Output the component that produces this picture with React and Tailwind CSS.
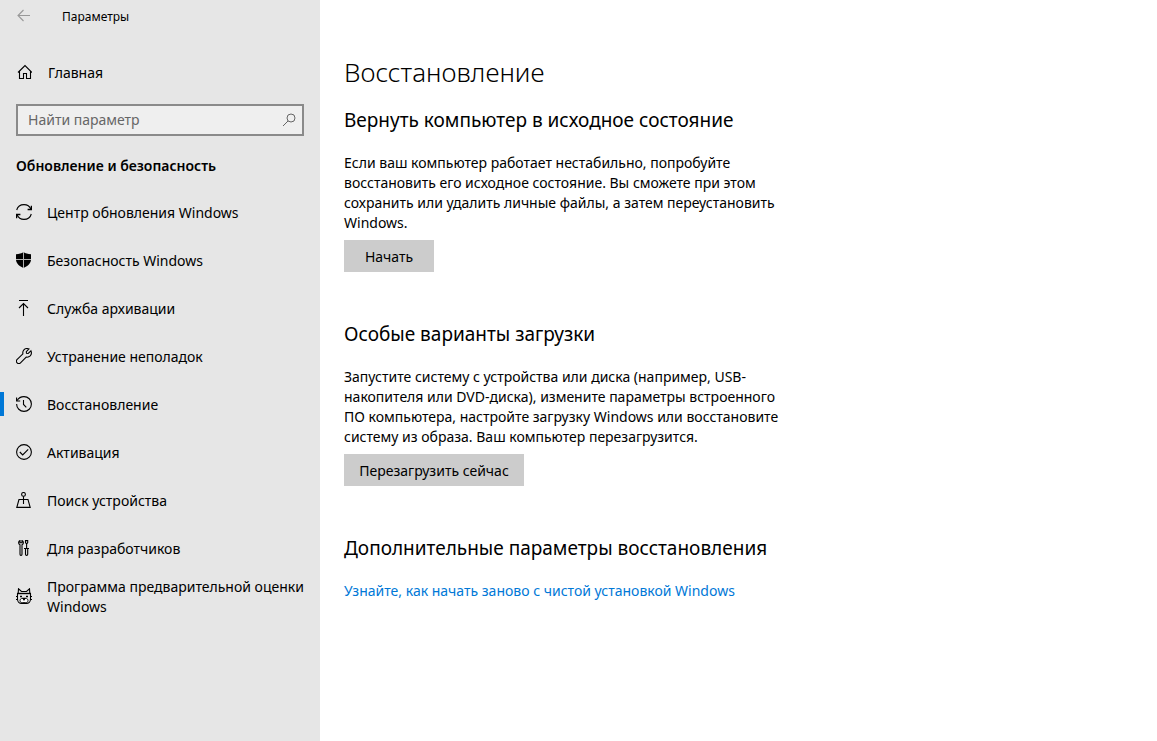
import { useState } from 'react';

const Icon = ({ children }) => (
  <svg
    viewBox="0 0 16 16"
    className="w-4 h-4 shrink-0"
    fill="none"
    stroke="currentColor"
    strokeWidth="1.1"
    aria-hidden="true"
  >
    {children}
  </svg>
);

const BackIcon = () => (
  <Icon>
    <path d="M14 7.5H2.5M7.5 2L2 7.5L7.5 13" />
  </Icon>
);

const HomeIcon = () => (
  <Icon>
    <path d="M2 8.5L9 1.5L16 8.5M3.5 7.5V14.5H7.5V9.5H10.5V14.5H14.5V7.5" />
  </Icon>
);

const SearchIcon = () => (
  <Icon>
    <circle cx="10" cy="6" r="4" strokeWidth="1" />
    <path d="M7 9L2 14" strokeWidth="1" />
  </Icon>
);

const UpdateIcon = () => (
  <Icon>
    <path d="M0.7 6C1.6 2.8 4.6 0.6 8 0.6C11.2 0.6 13.8 2.4 15 5.2M15.3 10C14.4 13.2 11.4 15.4 8 15.4C4.8 15.4 2.2 13.6 1 10.8" />
    <path d="M15.4 1.8V5.5H11.6M0.6 14.2V10.5H4.4" strokeWidth="1.3" />
  </Icon>
);

const ShieldIcon = () => (
  <Icon>
    <path
      d="M7.5 0C5.8 1.3 3 2.2 0 2.2V7.5C0 11.5 3.8 14.4 7.5 16C11.2 14.4 15 11.5 15 7.5V2.2C12 2.2 9.2 1.3 7.5 0Z"
      fill="currentColor"
      stroke="none"
    />
    <path d="M7.5 0V16M0 7.5H15" stroke="#b0b0b0" strokeWidth="1" />
  </Icon>
);

const BackupIcon = () => (
  <Icon>
    <path d="M3 0.5H12M7.5 16V3.5M3 8L7.5 3.5L12 8" />
  </Icon>
);

const WrenchIcon = () => (
  <Icon>
    <path d="M14.9 2.8L12.2 5.5L10.5 5.2L10.3 3.7L13 1C11.2 0.2 9 0.6 7.7 2.1C6.8 3.2 6.6 4.5 6.9 5.8L1.2 11.4C0.2 12.4 0.2 13.9 1.1 14.8C2.1 15.8 3.6 15.7 4.5 14.8L10.2 9.1C11.6 9.4 13.1 9 14.2 7.9C15.5 6.5 15.7 4.5 14.9 2.8Z" />
  </Icon>
);

const HistoryIcon = () => (
  <Icon>
    <path d="M1.1 4.6C2.4 2.2 5 0.6 8 0.6C12.1 0.6 15.4 3.9 15.4 8C15.4 12.1 12.1 15.4 8 15.4C3.9 15.4 0.6 12.1 0.6 8" />
    <path d="M0.6 1.5V5H4.2M7.5 4V8.5L10.3 11.3" />
  </Icon>
);

const CheckIcon = () => (
  <Icon>
    <circle cx="8" cy="8" r="7.4" />
    <path d="M3.8 8L6.7 10.9L12.2 5.4" />
  </Icon>
);

const FindDeviceIcon = () => (
  <Icon>
    <circle cx="7.5" cy="2.4" r="1.9" />
    <path d="M7.5 4.3V12M3 7.5L0.8 15.4H14.2L12 7.5Z" />
  </Icon>
);

const ToolsIcon = () => (
  <Icon>
    <path d="M4 0.6C3 1 2.6 1.8 2.6 2.7C2.6 3.6 3 4.2 4 4.8V14.2C4 15.7 6 15.7 6 14.2V4.8C7 4.2 7.4 3.6 7.4 2.7C7.4 1.8 7 1 6 0.6V2.8H4Z" />
    <path d="M9.5 0.6H11.7V2.5L10.6 4L9.5 2.5ZM10.6 4V8.5M8 8.5H13M9.5 8.5V14.3C9.5 15.7 11.7 15.7 11.7 14.3V8.5" />
  </Icon>
);

const InsiderIcon = () => (
  <Icon>
    <path d="M2.2 5.5L2.5 0.8L5.5 3.5H10.5L13.5 0.8L13.8 5.5" />
    <path d="M1 5.5H15" strokeWidth="1.4" />
    <path d="M1.5 5.5V11C1.5 13.8 3.5 15.4 5.5 15.4H10.5C12.5 15.4 14.5 13.8 14.5 11V5.5M0 8.5H2M14 8.5H16M0 11.5H2M14 11.5H16" />
    <path d="M4 8.5H6M10 8.5H12" strokeWidth="1.6" />
    <path
      d="M8 11C6.5 10 4 10.4 4 12.3C4 14 5.2 14.6 6.3 14.6H9.7C10.8 14.6 12 14 12 12.3C12 10.4 9.5 10 8 11Z"
      fill="#ffffff"
      strokeWidth="0.9"
    />
    <path d="M7 10.3H9L8 12Z" fill="currentColor" />
  </Icon>
);

const navItems = [
  { label: 'Центр обновления Windows', icon: UpdateIcon },
  { label: 'Безопасность Windows', icon: ShieldIcon },
  { label: 'Служба архивации', icon: BackupIcon },
  { label: 'Устранение неполадок', icon: WrenchIcon },
  { label: 'Восстановление', icon: HistoryIcon },
  { label: 'Активация', icon: CheckIcon },
  { label: 'Поиск устройства', icon: FindDeviceIcon },
  { label: 'Для разработчиков', icon: ToolsIcon },
  { label: 'Программа предварительной оценки Windows', icon: InsiderIcon },
];

const Section = ({ title, children }) => (
  <section className="mb-12">
    <h2 className="text-[19px] leading-7 mb-[19px]">{title}</h2>
    {children}
  </section>
);

const ActionButton = ({ className, children }) => (
  <button type="button" className={`mt-[7px] h-8 pt-0.5 bg-[#cccccc] hover:bg-[#bbbbbb] ${className}`}>
    {children}
  </button>
);

const App = () => {
  const [active, setActive] = useState('Восстановление');
  const [query, setQuery] = useState('');

  return (
    <div className="flex min-h-screen bg-white text-black text-sm leading-5 font-['Noto_Sans',sans-serif]">
      <aside className="w-80 shrink-0 bg-[#e6e6e6]">
        <header className="flex items-center h-8 pl-4">
          <button type="button" aria-label="Назад" className="text-[#999999]">
            <BackIcon />
          </button>
          <span className="ml-[30px] pt-0.5 text-xs">Параметры</span>
        </header>

        <a href="#home" className="flex items-center gap-4 h-12 mt-4 px-4">
          <HomeIcon />
          <span className="pt-0.5">Главная</span>
        </a>

        <label className="flex items-center h-8 mt-2 mx-4 pl-[10px] pr-[5px] border-2 border-[#8a8a8a] bg-[#efefef]">
          <input
            type="text"
            aria-label="Найти параметр"
            placeholder="Найти параметр"
            value={query}
            onChange={(e) => setQuery(e.target.value)}
            className="flex-1 min-w-0 bg-transparent outline-none placeholder:text-[#666666]"
          />
          <span className="text-[#666666]">
            <SearchIcon />
          </span>
        </label>

        <h2 className="mt-5 mb-3 px-4 font-semibold">Обновление и безопасность</h2>

        <nav>
          {navItems.map((item) => (
            <a
              key={item.label}
              href="#settings"
              onClick={() => setActive(item.label)}
              className="flex items-center h-12"
            >
              <span className={`w-1 h-6 mr-3 shrink-0 ${active === item.label ? 'bg-[#0078d7]' : ''}`} />
              <item.icon />
              <span className="ml-[15px] pt-0.5">{item.label}</span>
            </a>
          ))}
        </nav>
      </aside>

      <main className="flex-1 min-w-0 pl-6 pr-6 pt-[54px]">
        <h1 className="text-[26px] leading-9 font-light mb-4">Восстановление</h1>

        <Section title="Вернуть компьютер в исходное состояние">
          <p className="max-w-[448px]">
            Если ваш компьютер работает нестабильно, попробуйте восстановить его исходное состояние. Вы
            сможете при этом сохранить или удалить личные файлы, а затем переустановить Windows.
          </p>
          <ActionButton className="w-[90px]">Начать</ActionButton>
        </Section>

        <Section title="Особые варианты загрузки">
          <p className="max-w-[448px]">
            Запустите систему с устройства или диска (например, USB-накопителя или DVD-диска), измените
            параметры встроенного ПО компьютера, настройте загрузку Windows или восстановите систему из
            образа. Ваш компьютер перезагрузится.
          </p>
          <ActionButton className="w-[180px]">Перезагрузить сейчас</ActionButton>
        </Section>

        <Section title="Дополнительные параметры восстановления">
          <a href="#clean-install" className="text-[#0078d7] hover:text-[#666666]">
            Узнайте, как начать заново с чистой установкой Windows
          </a>
        </Section>
      </main>
    </div>
  );
};

export default App;
